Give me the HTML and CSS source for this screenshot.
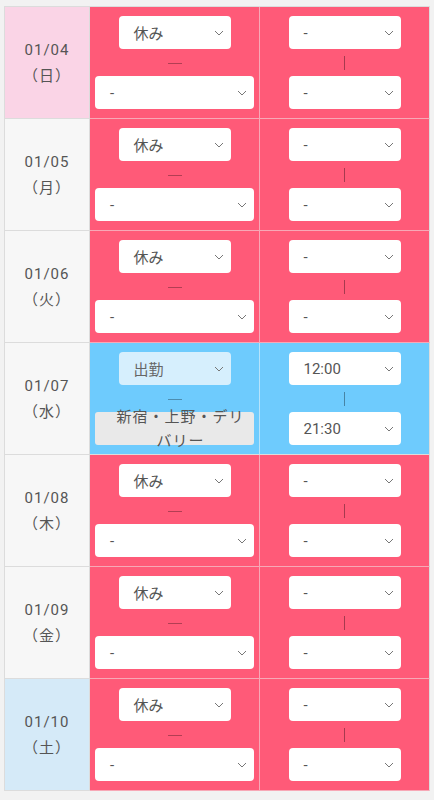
FILE: index.html
```html
<!DOCTYPE html>
<html lang="ja">
<head>
<meta charset="utf-8">
<link rel="stylesheet" href="styles.css">
</head>
<body>
<div class="table">
  <div class="row off">
    <div class="date sun">01/04<br>（日）</div>
    <div class="cell mid">
      <div class="sel small">休み<svg class="chev" viewBox="0 0 10 6"><polyline points="1,1 5,5 9,1"/></svg></div>
      <div class="dash"></div>
      <div class="sel wide">-<svg class="chev" viewBox="0 0 10 6"><polyline points="1,1 5,5 9,1"/></svg></div>
    </div>
    <div class="cell right">
      <div class="sel small">-<svg class="chev" viewBox="0 0 10 6"><polyline points="1,1 5,5 9,1"/></svg></div>
      <div class="vbar"></div>
      <div class="sel small">-<svg class="chev" viewBox="0 0 10 6"><polyline points="1,1 5,5 9,1"/></svg></div>
    </div>
  </div>
  <div class="row off">
    <div class="date">01/05<br>（月）</div>
    <div class="cell mid">
      <div class="sel small">休み<svg class="chev" viewBox="0 0 10 6"><polyline points="1,1 5,5 9,1"/></svg></div>
      <div class="dash"></div>
      <div class="sel wide">-<svg class="chev" viewBox="0 0 10 6"><polyline points="1,1 5,5 9,1"/></svg></div>
    </div>
    <div class="cell right">
      <div class="sel small">-<svg class="chev" viewBox="0 0 10 6"><polyline points="1,1 5,5 9,1"/></svg></div>
      <div class="vbar"></div>
      <div class="sel small">-<svg class="chev" viewBox="0 0 10 6"><polyline points="1,1 5,5 9,1"/></svg></div>
    </div>
  </div>
  <div class="row off">
    <div class="date">01/06<br>（火）</div>
    <div class="cell mid">
      <div class="sel small">休み<svg class="chev" viewBox="0 0 10 6"><polyline points="1,1 5,5 9,1"/></svg></div>
      <div class="dash"></div>
      <div class="sel wide">-<svg class="chev" viewBox="0 0 10 6"><polyline points="1,1 5,5 9,1"/></svg></div>
    </div>
    <div class="cell right">
      <div class="sel small">-<svg class="chev" viewBox="0 0 10 6"><polyline points="1,1 5,5 9,1"/></svg></div>
      <div class="vbar"></div>
      <div class="sel small">-<svg class="chev" viewBox="0 0 10 6"><polyline points="1,1 5,5 9,1"/></svg></div>
    </div>
  </div>
  <div class="row on">
    <div class="date">01/07<br>（水）</div>
    <div class="cell mid">
      <div class="sel small work">出勤<svg class="chev" viewBox="0 0 10 6"><polyline points="1,1 5,5 9,1"/></svg></div>
      <div class="dash"></div>
      <div class="btn"><span>新宿・上野・デリバリー</span></div>
    </div>
    <div class="cell right">
      <div class="sel small">12:00<svg class="chev" viewBox="0 0 10 6"><polyline points="1,1 5,5 9,1"/></svg></div>
      <div class="vbar"></div>
      <div class="sel small">21:30<svg class="chev" viewBox="0 0 10 6"><polyline points="1,1 5,5 9,1"/></svg></div>
    </div>
  </div>
  <div class="row off">
    <div class="date">01/08<br>（木）</div>
    <div class="cell mid">
      <div class="sel small">休み<svg class="chev" viewBox="0 0 10 6"><polyline points="1,1 5,5 9,1"/></svg></div>
      <div class="dash"></div>
      <div class="sel wide">-<svg class="chev" viewBox="0 0 10 6"><polyline points="1,1 5,5 9,1"/></svg></div>
    </div>
    <div class="cell right">
      <div class="sel small">-<svg class="chev" viewBox="0 0 10 6"><polyline points="1,1 5,5 9,1"/></svg></div>
      <div class="vbar"></div>
      <div class="sel small">-<svg class="chev" viewBox="0 0 10 6"><polyline points="1,1 5,5 9,1"/></svg></div>
    </div>
  </div>
  <div class="row off">
    <div class="date">01/09<br>（金）</div>
    <div class="cell mid">
      <div class="sel small">休み<svg class="chev" viewBox="0 0 10 6"><polyline points="1,1 5,5 9,1"/></svg></div>
      <div class="dash"></div>
      <div class="sel wide">-<svg class="chev" viewBox="0 0 10 6"><polyline points="1,1 5,5 9,1"/></svg></div>
    </div>
    <div class="cell right">
      <div class="sel small">-<svg class="chev" viewBox="0 0 10 6"><polyline points="1,1 5,5 9,1"/></svg></div>
      <div class="vbar"></div>
      <div class="sel small">-<svg class="chev" viewBox="0 0 10 6"><polyline points="1,1 5,5 9,1"/></svg></div>
    </div>
  </div>
  <div class="row off">
    <div class="date sat">01/10<br>（土）</div>
    <div class="cell mid">
      <div class="sel small">休み<svg class="chev" viewBox="0 0 10 6"><polyline points="1,1 5,5 9,1"/></svg></div>
      <div class="dash"></div>
      <div class="sel wide">-<svg class="chev" viewBox="0 0 10 6"><polyline points="1,1 5,5 9,1"/></svg></div>
    </div>
    <div class="cell right">
      <div class="sel small">-<svg class="chev" viewBox="0 0 10 6"><polyline points="1,1 5,5 9,1"/></svg></div>
      <div class="vbar"></div>
      <div class="sel small">-<svg class="chev" viewBox="0 0 10 6"><polyline points="1,1 5,5 9,1"/></svg></div>
    </div>
  </div>
</div>
</body>
</html>
```
FILE: styles.css
```css
html, body {
  margin: 0;
  padding: 0;
  background: #f2f2f2;
}
body {
  padding: 6px 5px 0 4px;
  font-family: Roboto, "Noto Sans CJK JP", sans-serif;
  color: #555;
  height: 800px;
  box-sizing: border-box;
  overflow: hidden;
}
.table {
  width: 425px;
  border-top: 1px solid #dcdcdc;
  border-left: 1px solid #dcdcdc;
}
.row {
  display: grid;
  grid-template-columns: 85px 170px 170px;
  height: 112px;
}
.row > div {
  border-right: 1px solid #dcdcdc;
  border-bottom: 1px solid #dcdcdc;
  box-sizing: border-box;
}
.row.off .cell { background: #ff5a78; }
.row.off .cell.mid { border-right-color: #f7a8b6; }
.row.off .cell { border-bottom-color: #f7a8b6; }
.row.on .cell { background: #6ecbfd; }
.row.on .cell.mid { border-right-color: #b7e3fb; }
.date {
  background: #f7f7f7;
  display: flex;
  align-items: center;
  justify-content: center;
  text-align: center;
  font-size: 15px;
  line-height: 26px;
  letter-spacing: 1px;
  color: #555;
  padding-top: 1px;
}
.date.sun { background: #fad4e6; }
.date.sat { background: #d5eaf8; }
.cell {
  display: flex;
  flex-direction: column;
  align-items: center;
  padding: 9px 5px 0 5px;
}
.sel {
  position: relative;
  height: 33px;
  background: #fff;
  border-radius: 4px;
  box-sizing: border-box;
  padding-left: 15px;
  display: flex;
  align-items: center;
  font-size: 15px;
  color: #555;
}
.sel.small { width: 112px; }
.sel.wide { width: 159px; align-self: stretch; }
.sel.work { background: #d6effd; color: #666; }
.chev {
  position: absolute;
  right: 7px;
  top: 14px;
  width: 10px;
  height: 6px;
  fill: none;
  stroke: #777;
  stroke-width: 1;
}
.dash {
  height: 27px;
  width: 14px;
  display: flex;
  align-items: center;
}
.dash::before {
  content: "";
  display: block;
  width: 14px;
  height: 1px;
  margin-top: 1px;
  background: rgba(0, 0, 0, 0.3);
}
.vbar {
  height: 27px;
  display: flex;
  align-items: center;
}
.vbar::before {
  content: "";
  display: block;
  width: 1px;
  height: 14px;
  background: rgba(0, 0, 0, 0.35);
}
.btn {
  height: 33px;
  align-self: stretch;
  background: #e9e9e9;
  border-radius: 3px;
  display: flex;
  align-items: center;
  justify-content: center;
  text-align: center;
  padding: 0 4px 0 16px;
  font-size: 15px;
  line-height: 24px;
  letter-spacing: 1px;
  color: #555;
}
.btn span { display: block; }
```
